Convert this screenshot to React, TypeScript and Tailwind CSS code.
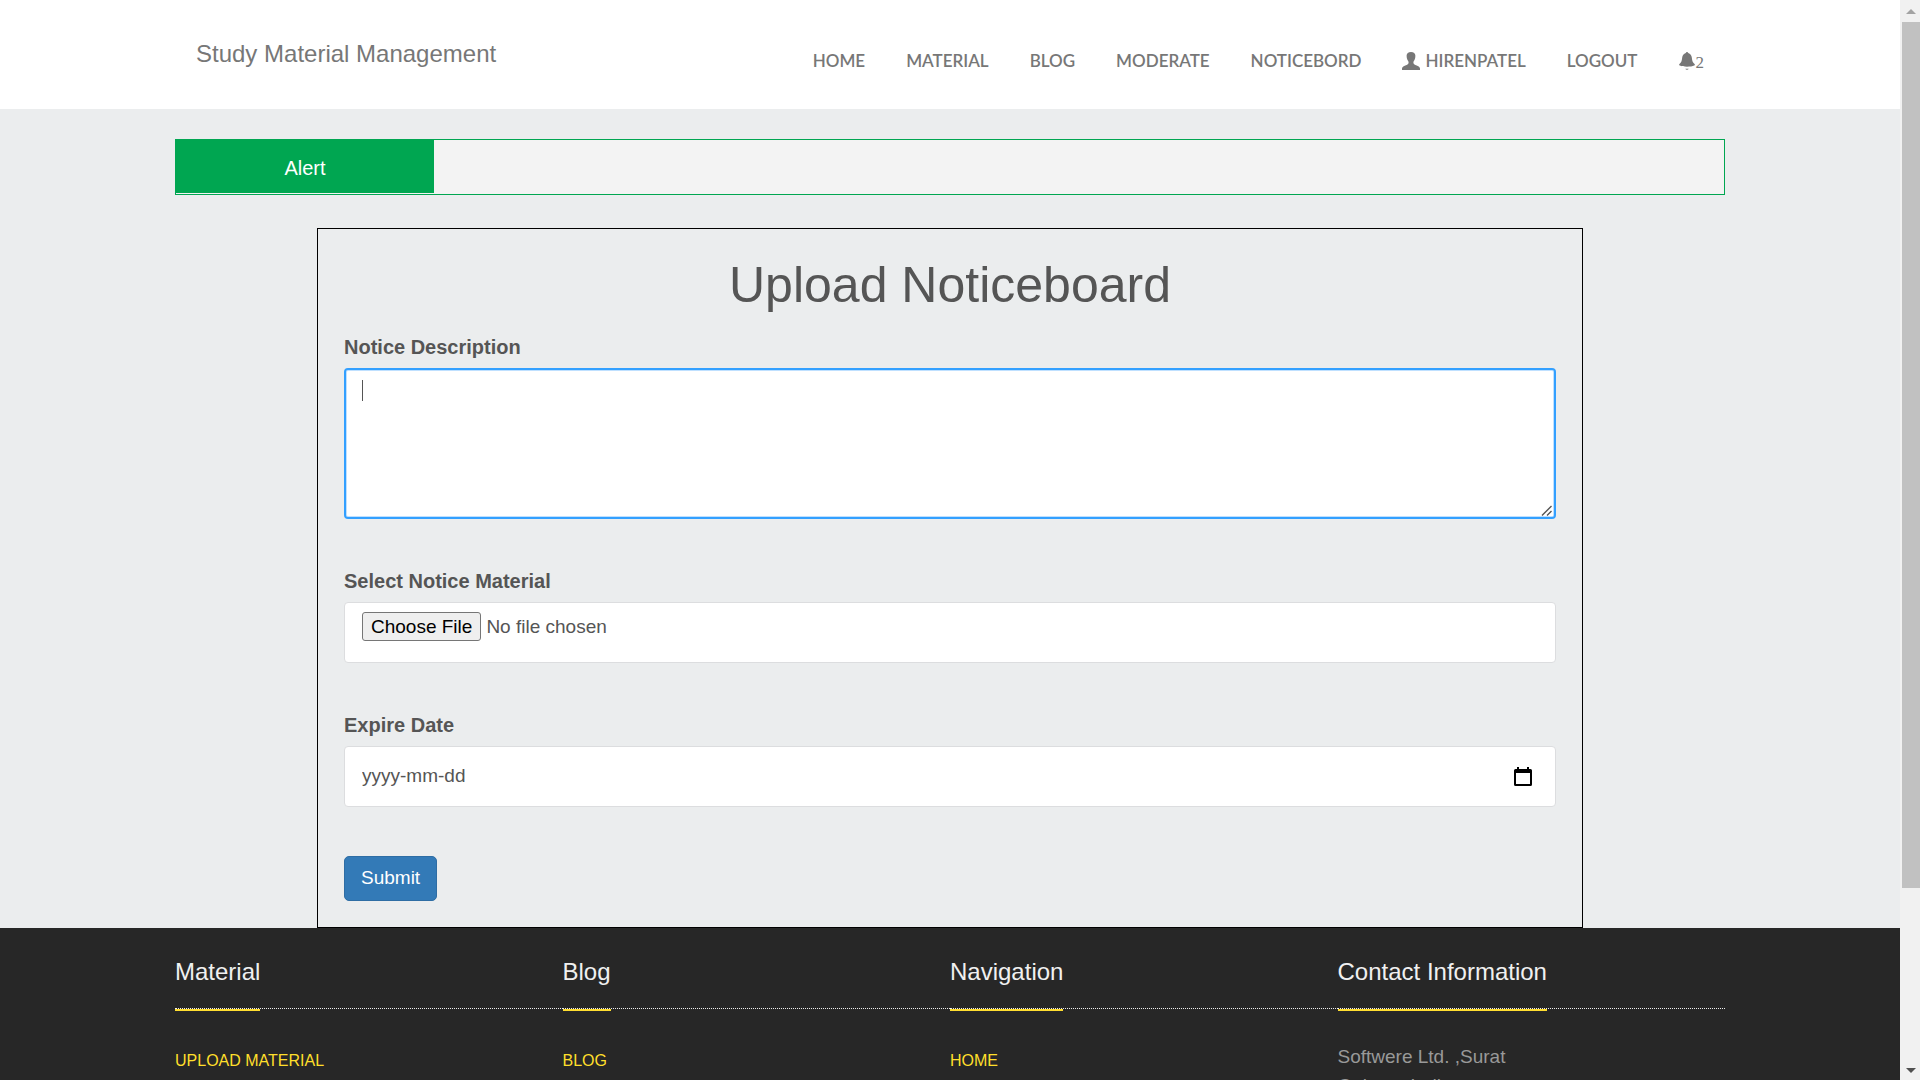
import React from "react";

const NAV_LEFT = ["Home", "Material", "Blog", "Moderate", "Noticebord"];

const FOOTER = [
  { title: "Material", link: "Upload Material" },
  { title: "Blog", link: "Blog" },
  { title: "Navigation", link: "Home" },
];

function UserIcon() {
  return (
    <svg viewBox="0 0 18 18" className="h-[18px] w-[18px] shrink-0" fill="currentColor" aria-hidden="true">
      <path d="M9 0C6.300 0 4.600 1.400 4.600 3.800c0 1.500.3 2.900.8 4 .5 1 1.200 1.600 1.200 2.800 0 1.300-.7 1.900-2 2.400C1.900 14 0 14.800 0 16.500V18h18v-1.500c0-1.700-1.900-2.500-4.600-3.500-1.300-.5-2-1.100-2-2.400 0-1.200.7-1.800 1.200-2.800.5-1.100.8-2.500.8-4C13.400 1.400 11.700 0 9 0z" />
    </svg>
  );
}

function BellIcon() {
  return (
    <svg viewBox="0 0 16 18" className="h-[18px] w-4 shrink-0" fill="currentColor" aria-hidden="true">
      <path d="M8 0c.7 0 1.100.4 1.200 1 2.200.6 3.300 2.300 3.600 4.600.4 3.100.6 4.900 2.500 6.200.9.600.7 1.500-.1 1.800-1.700.8-4.200 1.200-7.200 1.200s-5.500-.4-7.200-1.200c-.8-.3-1-1.200-.1-1.800 1.900-1.300 2.100-3.100 2.500-6.200C3.500 3.300 4.600 1.600 6.800 1 6.900.4 7.300 0 8 0z" />
      <path d="M6.300 16.700h3.400c-.3.700-.9 1-1.700 1s-1.400-.3-1.700-1z" />
    </svg>
  );
}

function CalendarIcon() {
  return (
    <svg viewBox="0 0 18 20" className="h-5 w-[18px]" fill="currentColor" aria-hidden="true">
      <path d="M3 0h2v2h8V0h2v2h1.500A1.500 1.500 0 0 1 18 3.500v14a1.500 1.500 0 0 1-1.500 1.500h-15A1.500 1.500 0 0 1 0 17.500v-14A1.500 1.500 0 0 1 1.500 2H3zM2 6v11h14V6z" />
    </svg>
  );
}

function ResizeGrip() {
  return (
    <svg
      viewBox="0 0 12 12"
      className="pointer-events-none absolute right-[3px] bottom-[3px] h-3 w-3 bg-white"
      stroke="#555"
      strokeWidth="1.400"
      aria-hidden="true"
    >
      <path d="M1 11.500L10.500 2M6 11.500L10.500 7" />
    </svg>
  );
}

function ScrollBar() {
  return (
    <div className="flex w-5 shrink-0 flex-col items-center bg-[#f1f1f1] pl-[2px] text-[#505050]" aria-hidden="true">
      <svg viewBox="0 0 18 22" className="h-[22px] w-[18px] shrink-0" fill="#a3a3a3">
        <path d="M9 9l5 5H4z" />
      </svg>
      <div className="w-full flex-[866] bg-[#c1c1c1]" />
      <div className="flex-[170]" />
      <svg viewBox="0 0 18 22" className="h-[22px] w-[18px] shrink-0" fill="currentColor">
        <path d="M9 15l5-5H4z" />
      </svg>
    </div>
  );
}

function Header() {
  return (
    <header className="bg-white">
      <div className="mx-auto flex h-[109px] max-w-[1550px] items-center justify-between px-[21px] text-[#777]">
        <a href="#" className="pb-[2px] text-2xl leading-6">Study Material Management</a>
        <nav className="mt-3 flex items-center gap-[41px] font-['Lato'] text-[17px] leading-6 font-semibold uppercase">
          {NAV_LEFT.map((n) => (
            <a key={n} href="#">{n}</a>
          ))}
          <a href="#" className="flex items-center gap-[5px]">
            <UserIcon />
            Hirenpatel
          </a>
          <a href="#">Logout</a>
          <a href="#" className="flex items-center gap-px font-['Liberation_Serif'] font-normal" aria-label="Notifications">
            <BellIcon />
            <span className="pt-1">2</span>
          </a>
        </nav>
      </div>
    </header>
  );
}

const label = "mb-[7px] block text-xl leading-7 font-bold";
const field = "w-full rounded border border-[#dcdddf] bg-white px-[17px] text-[19px] text-[#555]";

function NoticeForm() {
  return (
    <form className="mx-auto mt-[33px] max-w-[1266px] border border-black px-[26px] pt-6 pb-[26px] text-[#555]">
      <h1 className="text-center text-[50px] leading-[64px]">Upload Noticeboard</h1>
      <div className="mt-4 mb-12">
        <label htmlFor="description" className={label}>Notice Description</label>
        <div className="relative">
          <textarea
            id="description"
            className="block h-[151px] w-full resize-y rounded border-2 border-[#33a0ff] bg-white px-4 py-2 text-[19px] leading-7 caret-transparent shadow-[inset_0_0_0_1px_#bfe0ff] outline-none"
          />
          <span className="pointer-events-none absolute top-3 left-[18px] h-[21px] w-px bg-[#555]" />
          <ResizeGrip />
        </div>
      </div>
      <div className="mb-12">
        <label htmlFor="material" className={label}>Select Notice Material</label>
        <input
          id="material"
          type="file"
          className={`${field} block h-[61px] pt-[9px] file:mr-[5px] file:h-[29px] file:rounded-[3px] file:border file:border-solid file:border-[#767676] file:bg-[#efefef] file:px-2 file:text-[19px] file:text-black`}
        />
      </div>
      <div className="mb-[49px]">
        <label htmlFor="expires" className={label}>Expire Date</label>
        <div className={`${field} flex h-[61px] items-center pr-[23px]`}>
          <input
            id="expires"
            type="text"
            placeholder="yyyy-mm-dd"
            className="min-w-0 flex-1 outline-none placeholder:text-[#555]"
          />
          <button type="button" aria-label="Open calendar" className="text-black">
            <CalendarIcon />
          </button>
        </div>
      </div>
      <button type="submit" className="block h-[45px] rounded-[5px] border border-[#2e6da4] bg-[#337ab7] px-4 text-[19px] text-white">
        Submit
      </button>
    </form>
  );
}

function Footer() {
  return (
    <footer className="flex-1 bg-[#272727]">
      <div className="mx-auto grid max-w-[1550px] grid-cols-4">
        {FOOTER.map((c) => (
          <section key={c.title}>
            <FooterTitle>{c.title}</FooterTitle>
            <a href="#" className="mt-[38px] block text-base leading-7 text-[#ffdf2b] uppercase">{c.link}</a>
          </section>
        ))}
        <section>
          <FooterTitle>Contact Information</FooterTitle>
          <address className="mt-[33px] text-[19px] leading-[29px] text-[#999] not-italic">
            Softwere Ltd. ,Surat
            <br />
            Gujarat, India
          </address>
        </section>
      </div>
    </footer>
  );
}

function FooterTitle({ children }: { children: React.ReactNode }) {
  return (
    <div className="h-[81px] border-b border-dotted border-[#eee]">
      <h2 className="inline-block h-[83px] border-b-2 border-[#ffdd30] pt-7 text-2xl leading-8 text-[#f0f0f0]">{children}</h2>
    </div>
  );
}

export default function App() {
  return (
    <div className="flex h-screen overflow-hidden bg-[#ebedee] font-['Liberation_Sans',Arial,sans-serif]">
      <div className="flex min-w-0 flex-1 flex-col overflow-hidden">
        <Header />
        <main className="shrink-0 pt-[30px]">
          <div className="mx-auto h-14 max-w-[1550px] border border-[#00a651] bg-[#f3f3f3]">
            <div className="flex h-[53px] w-[258px] items-center justify-center bg-[#00a651] pt-[2px] text-xl text-white">
              Alert
            </div>
          </div>
          <NoticeForm />
        </main>
        <Footer />
      </div>
      <ScrollBar />
    </div>
  );
}
